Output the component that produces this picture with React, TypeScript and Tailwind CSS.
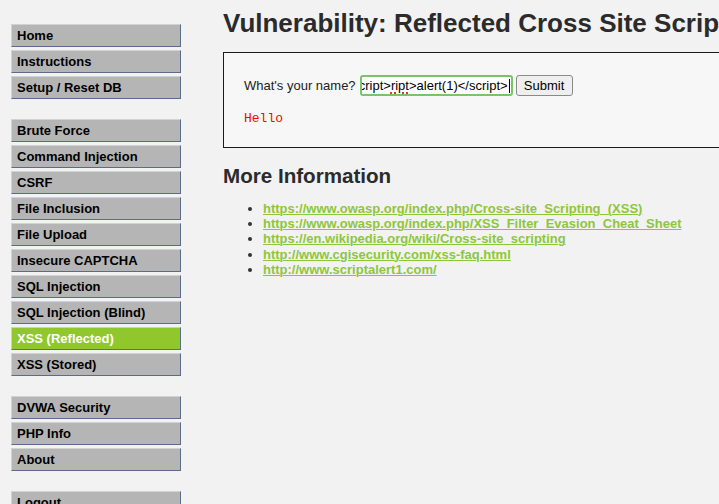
import React from "react";

const groups: string[][] = [
  ["Home", "Instructions", "Setup / Reset DB"],
  [
    "Brute Force",
    "Command Injection",
    "CSRF",
    "File Inclusion",
    "File Upload",
    "Insecure CAPTCHA",
    "SQL Injection",
    "SQL Injection (Blind)",
    "XSS (Reflected)",
    "XSS (Stored)",
  ],
  ["DVWA Security", "PHP Info", "About"],
  ["Logout"],
];

const links = [
  "https://www.owasp.org/index.php/Cross-site_Scripting_(XSS)",
  "https://www.owasp.org/index.php/XSS_Filter_Evasion_Cheat_Sheet",
  "https://en.wikipedia.org/wiki/Cross-site_scripting",
  "http://www.cgisecurity.com/xss-faq.html",
  "http://www.scriptalert1.com/",
];

export default function App() {
  return (
    <div className="w-[719px] h-[504px] overflow-hidden bg-[#f2f2f2] flex font-['Liberation_Sans',Arial,sans-serif] text-[#2b2b2b]">
      <div className="w-[223px] shrink-0 pl-[11px] pt-[24px] flex flex-col gap-[20px]">
        {groups.map((g, gi) => (
          <div key={gi} className="w-[170px] flex flex-col gap-[3px]">
            {g.map((item) => {
              const sel = item === "XSS (Reflected)";
              return (
                <div
                  key={item}
                  className={
                    sel
                      ? "h-[23px] flex items-center pl-[5px] text-[13px] font-bold leading-none bg-[#8fc72c] text-white border-t border-l border-[#c5dc9a] border-r border-b border-r-[#5c6b8a] border-b-[#5c6b8a]"
                      : "h-[23px] flex items-center pl-[5px] text-[13px] font-bold leading-none bg-[#b5b5b5] text-black border-t border-l border-[#d2d2d2] border-r border-b border-r-[#5c6b8a] border-b-[#5c6b8a]"
                  }
                >
                  {item}
                </div>
              );
            })}
          </div>
        ))}
      </div>
      <div className="flex-1 min-w-0 pt-[8px]">
        <h1 className="text-[26px] leading-[30px] font-bold whitespace-nowrap text-[#2b2b2b]">
          Vulnerability: Reflected Cross Site Scripting (XSS)
        </h1>
        <div className="mt-[14px] w-[560px] h-[96px] border border-[#1a1a1a] bg-[#f6f7f6] pt-[22px] pl-[20px]">
          <div className="flex items-center h-[21px] text-[13px] text-[#222]">
            <span className="mr-[4px]">What's your name?</span>
            <div className="w-[153px] h-[21px] border-2 border-[#7bc36a] rounded-[3px] bg-white flex items-center justify-end overflow-hidden pr-[1px]">
              <span className="whitespace-nowrap text-[13px] text-black leading-none">
                cript&gt;
                <span className="underline decoration-dotted decoration-[#e0333a] decoration-2 underline-offset-2">ript</span>
                &gt;alert(1)&lt;/script&gt;
              </span>
              <span className="w-px h-[14px] bg-black ml-px shrink-0" />
            </div>
            <div className="ml-[3px] w-[57px] h-[21px] border border-[#8a8a8a] rounded-[3px] bg-[#efefef] flex items-center justify-center text-[13px] text-black">
              Submit
            </div>
          </div>
          <pre className="mt-[15px] text-[13px] leading-[15px] text-[#ff0000] font-['Liberation_Mono','Courier_New',monospace]">
            Hello
          </pre>
        </div>
        <h2 className="mt-[16px] text-[20.6px] leading-[24px] font-bold text-[#2b2b2b]">More Information</h2>
        <ul className="mt-[13px] list-disc pl-[40px] text-[13px] leading-[15.2px] marker:text-[#333]">
          {links.map((l) => (
            <li key={l}>
              <span className="font-bold text-[#8dc63b] underline decoration-1 underline-offset-1 whitespace-nowrap">{l}</span>
            </li>
          ))}
        </ul>
      </div>
    </div>
  );
}
